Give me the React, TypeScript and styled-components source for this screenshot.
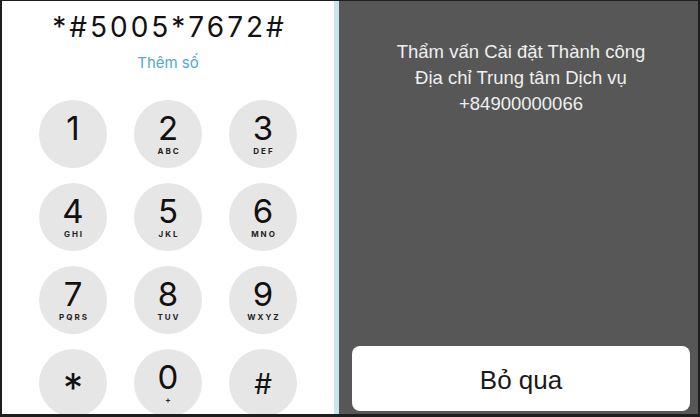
import React from "react";
import styled, { createGlobalStyle } from "styled-components";

const Global = createGlobalStyle`
  html, body { margin: 0; padding: 0; background: #1e1e1e; }
  #root { width: 700px; height: 417px; }
`;

const Frame = styled.div`
  width: 700px;
  height: 417px;
  box-sizing: border-box;
  padding: 1px 2px 3px 2px;
  background: #1e1e1e;
  display: flex;
  font-family: Inter, "Liberation Sans", sans-serif;
`;

const Dialer = styled.div`
  width: 332px;
  background: #ffffff;
  display: flex;
  flex-direction: column;
  align-items: center;
  overflow: hidden;
`;

const Divider = styled.div`
  width: 5px;
  background: #c9e4ea;
`;

const Display = styled.div`
  margin-top: 9px;
  font-size: 28px;
  letter-spacing: 3px;
  margin-right: -3px;
  color: #111;
  line-height: 34px;
`;

const AddNumber = styled.div`
  margin-top: 10px;
  font-size: 15px;
  color: #55a5d6;
  line-height: 18px;
`;

const Pad = styled.div`
  margin-top: 28px;
  display: grid;
  grid-template-columns: repeat(3, 68px);
  column-gap: 27px;
  row-gap: 15px;
`;

const Key = styled.div<{ $symbol?: boolean }>`
  width: 68px;
  height: 68px;
  flex-shrink: 0;
  box-sizing: border-box;
  border-radius: 50%;
  background: #e6e6e6;
  display: flex;
  flex-direction: column;
  align-items: center;
  justify-content: ${(p) => (p.$symbol ? "center" : "flex-start")};
  padding-top: ${(p) => (p.$symbol ? 0 : 13)}px;
  color: #111;
`;

const Digit = styled.div<{ $size?: number; $shift?: number }>`
  font-size: ${(p) => p.$size ?? 33}px;
  line-height: 30px;
  height: 30px;
  font-weight: 400;
  margin-top: ${(p) => p.$shift ?? 0}px;
`;

const Letters = styled.div`
  margin-top: 4px;
  font-size: 8px;
  font-weight: 700;
  letter-spacing: 2px;
  line-height: 8px;
  margin-left: 2px;
  color: #222;
`;

const Alert = styled.div`
  flex: 1;
  background: #575757;
  display: flex;
  flex-direction: column;
  align-items: center;
  padding: 0 8px 3px 13px;
  font-family: "Liberation Sans", Arial, sans-serif;
`;

const Message = styled.div`
  margin-top: 38px;
  color: #f0f0f0;
  font-size: 18.5px;
  line-height: 26px;
  text-align: center;
  flex: 1;
`;

const Button = styled.div`
  align-self: stretch;
  height: 65px;
  background: #ffffff;
  border-radius: 8px;
  display: flex;
  align-items: center;
  justify-content: center;
  font-size: 26px;
  padding-top: 4px;
  box-sizing: border-box;
  color: #1a1a1a;
`;

const keys: { d: string; l?: string; size?: number; shift?: number; symbol?: boolean }[] = [
  { d: "1" },
  { d: "2", l: "ABC" },
  { d: "3", l: "DEF" },
  { d: "4", l: "GHI" },
  { d: "5", l: "JKL" },
  { d: "6", l: "MNO" },
  { d: "7", l: "PQRS" },
  { d: "8", l: "TUV" },
  { d: "9", l: "WXYZ" },
  { d: "*", size: 40, shift: 10, symbol: true },
  { d: "0", l: "+" },
  { d: "#", size: 28, shift: 2, symbol: true },
];

export default function App() {
  return (
    <>
      <Global />
      <Frame>
        <Dialer>
          <Display>*#5005*7672#</Display>
          <AddNumber>Thêm số</AddNumber>
          <Pad>
            {keys.map((k) => (
              <Key key={k.d} $symbol={k.symbol}>
                <Digit $size={k.size} $shift={k.shift}>
                  {k.d}
                </Digit>
                {k.l && <Letters>{k.l}</Letters>}
              </Key>
            ))}
          </Pad>
        </Dialer>
        <Divider />
        <Alert>
          <Message>
            Thẩm vấn Cài đặt Thành công
            <br />
            Địa chỉ Trung tâm Dịch vụ
            <br />
            +84900000066
          </Message>
          <Button>Bỏ qua</Button>
        </Alert>
      </Frame>
    </>
  );
}
